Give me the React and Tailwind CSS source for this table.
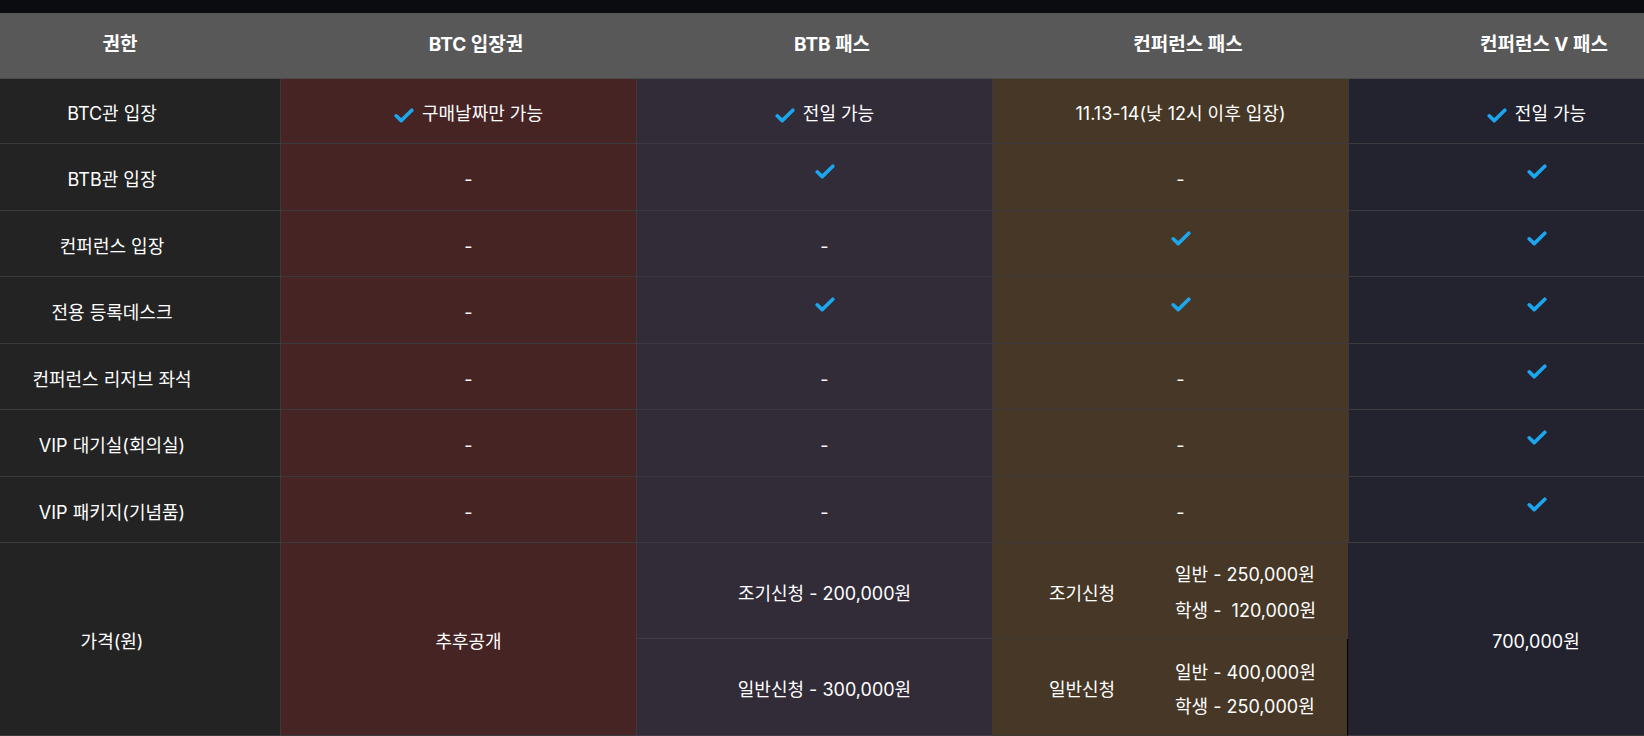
import React from "react";

const COLS = ["bg-[#232323]", "bg-[#462424]", "bg-[#322b38]", "bg-[#463726]", "bg-[#23222f]"];

const ROWS = [
  { label: "BTC관 입장", cells: [["check", "구매날짜만 가능"], ["check", "전일 가능"], [null, "11.13-14(낮 12시 이후 입장)"], ["check", "전일 가능"]], h: "h-[65px]" },
  { label: "BTB관 입장", cells: ["-", "check", "-", "check"], h: "h-[67px]" },
  { label: "컨퍼런스 입장", cells: ["-", "-", "check", "check"], h: "h-[66px]" },
  { label: "전용 등록데스크", cells: ["-", "check", "check", "check"], h: "h-[67px]" },
  { label: "컨퍼런스 리저브 좌석", cells: ["-", "-", "-", "check"], h: "h-[66px]" },
  { label: "VIP 대기실(회의실)", cells: ["-", "-", "-", "check"], h: "h-[67px]" },
  { label: "VIP 패키지(기념품)", cells: ["-", "-", "-", "check"], h: "h-[66px]" },
];

function Check({ className = "" }) {
  return (
    <svg width="20" height="15" viewBox="0 0 20 15" className={className}>
      <path
        d="M2.2 7.8 L7.2 12.6 L17.8 2.2"
        fill="none"
        stroke="#1ca6ee"
        strokeWidth="3.6"
        strokeLinecap="round"
        strokeLinejoin="round"
      />
    </svg>
  );
}

function CellContent({ value }) {
  if (value === "check") return <Check className="-translate-y-[8px]" />;
  if (Array.isArray(value)) {
    return (
      <div className="flex items-center gap-[8px]">
        {value[0] === "check" ? <Check className="translate-y-[2px]" /> : null}
        <span>{value[1]}</span>
      </div>
    );
  }
  return <span>{value}</span>;
}

export default function App() {
  const headers = ["권한", "BTC 입장권", "BTB 패스", "컨퍼런스 패스", "컨퍼런스 V 패스"];

  return (
    <div className="w-[1644px] h-[736px] overflow-hidden bg-[#0b0c0f] pt-[13px] text-white text-[18px] font-[Inter,'Noto_Sans_CJK_KR',sans-serif]">
      <div className="ml-[-76px] w-[1780px]">
        {/* header */}
        <div className="grid grid-cols-[repeat(5,356px)] h-[66px] bg-[#585858] border-b border-[#4c4c4c]">
          {headers.map((h) => (
            <div key={h} className="flex items-center justify-center pl-[36px] text-[19px] font-bold">
              {h}
            </div>
          ))}
        </div>

        {/* body rows */}
        {ROWS.map((row) => (
          <div key={row.label} className={`grid grid-cols-[repeat(5,356px)] ${row.h}`}>
            <div className={`${COLS[0]} flex items-center justify-center pl-[20px] pt-[5px] border-b border-[#3a3a3a]`}>
              {row.label}
            </div>
            {row.cells.map((c, i) => (
              <div
                key={i}
                className={`${COLS[i + 1]} flex items-center justify-center pl-[20px] pt-[5px] border-b border-l border-[#3d3a3f]`}
              >
                <CellContent value={c} />
              </div>
            ))}
          </div>
        ))}

        {/* price row */}
        <div className="grid grid-cols-[repeat(5,356px)] h-[193px]">
          <div className={`${COLS[0]} flex items-center justify-center pl-[20px] pt-[5px] border-b border-[#3a3a3a]`}>가격(원)</div>
          <div className={`${COLS[1]} flex items-center justify-center pl-[20px] pt-[5px] border-b border-l border-[#3d3a3f]`}>추후공개</div>
          <div className={`${COLS[2]} flex flex-col border-l border-[#3d3a3f]`}>
            <div className="h-[96px] flex items-center justify-center pl-[20px] pt-[5px] border-b border-[#403b44]">
              조기신청 - 200,000원
            </div>
            <div className="flex-1 flex items-center justify-center pl-[20px] pt-[5px] border-b border-[#403b44]">
              일반신청 - 300,000원
            </div>
          </div>
          <div className={`${COLS[3]} flex flex-col`}>
            <div className="h-[96px] flex items-center pt-[5px] border-b border-[#3f3a35]">
              <div className="w-[180px] text-center">조기신청</div>
              <div className="pl-[3px] flex flex-col leading-[36px]">
                <span>일반 - 250,000원</span>
                <span className="whitespace-pre">학생 -  120,000원</span>
              </div>
            </div>
            <div className="flex-1 flex items-center pt-[5px] border-b border-r border-b-[#3f3a35] border-r-black">
              <div className="w-[180px] text-center">일반신청</div>
              <div className="pl-[3px] flex flex-col leading-[34px]">
                <span>일반 - 400,000원</span>
                <span>학생 - 250,000원</span>
              </div>
            </div>
          </div>
          <div className={`${COLS[4]} flex items-center justify-center pl-[20px] pt-[5px] border-b border-[#3a3a3a]`}>700,000원</div>
        </div>
      </div>
    </div>
  );
}
